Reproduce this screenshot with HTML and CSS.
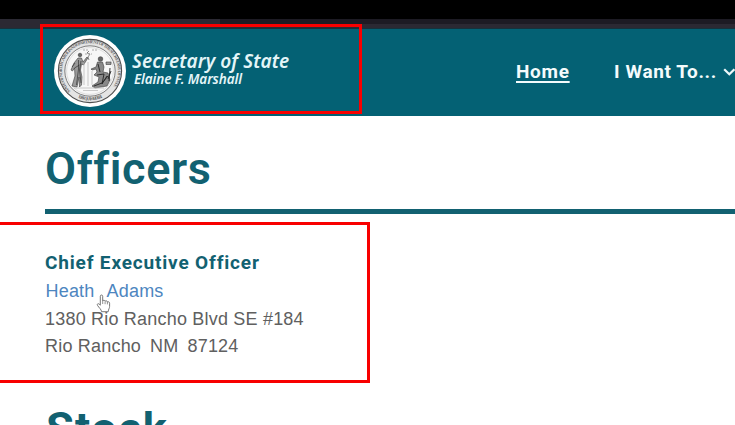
FILE: index.html
```html
<!DOCTYPE html>
<html lang="en">
<head>
<meta charset="utf-8">
<title>Secretary of State</title>
<link rel="stylesheet" href="styles.css">
</head>
<body>
<div class="letterbox"></div>
<div class="tabstrip"><div class="tab"></div></div>
<header class="header">
  <a class="brand">
    <svg class="seal" viewBox="0 0 72 72">
      <defs><path id="ring" d="M16.5 56.2A28 28 0 1 1 55.5 56.2"/><path id="base" d="M18 59.5Q36 71 54 59.5"/></defs>
      <circle cx="36" cy="36" r="36" fill="#fff"/>
      <circle cx="36" cy="36" r="31.6" fill="#e4e4e4" stroke="#4f4f4f" stroke-width="1.1"/>
      <circle cx="36" cy="36" r="25.2" fill="#f7f7f7" stroke="#707070" stroke-width=".9"/>
      <circle cx="36" cy="36" r="23.4" fill="none" stroke="#ccc" stroke-width=".6"/>
      <g class="seal-text">
        <text><textPath href="#ring" textLength="126">STATE OF NORTH CAROLINA DEPARTMENT OF THE SECRETARY OF STATE</textPath></text>
        <text><textPath href="#base" startOffset="7" textLength="25">ESSE QUAM VIDERI</textPath></text>
      </g>
      <g fill="#666" stroke="#3a3a3a" stroke-width=".6" stroke-linejoin="round">
        <circle cx="26" cy="20" r="1.8"/>
        <path d="M24 23l3.5 0 1.5 4 4-5 .8 1-4.3 7-2-1-1 6 1.5 7-.5 8-2 2-.5-10-2 10-5-1 3-10-.5-8-2 3-1.5-1 3-7z" fill="#999"/>
        <path d="M24.5 25l0 9-2 16M27 26l-1.5 9 1.5 13M20.5 33l5-3M21 28l-3 4" fill="none" stroke="#222"/>
        <path d="M33 18l3 1-2 3 1 3M33 18l2-2" fill="none"/>
        <circle cx="46.5" cy="24" r="2.3"/>
        <path d="M43.5 27l5 0 1.5 5-1 5 5 1 2 7-3 6-12 2-3-2 6-4 1-5-5-2 3-3-1-3-4 1-1-1 5-2z" fill="#888"/>
        <path d="M44 29l2 8M43 40l7-1-2 10 5-8M40 51l8-3 6-7M56 33l-1 13M57 36l-3 8" fill="none" stroke="#222" stroke-width=".9"/>
        <path d="M52 27h5v2.5h-5z" fill="#999"/>
      </g>
      <path d="M30 28v22M34 27v24M38 36v14M20 53h30M29 55.5h15" fill="none" stroke="#bbb" stroke-width=".8"/>
      <path d="M31 19h7M29 15h5M38 15h5" fill="none" stroke="#aaa" stroke-width="1" stroke-dasharray="2 1"/>
    </svg>
    <span class="names"><span class="dept">Secretary of State</span><span class="person">Elaine F. Marshall</span></span>
  </a>
  <nav class="nav">
    <a class="home">Home</a>
    <a class="want">I Want To...</a>
    <svg class="chev" viewBox="0 0 12 8"><path d="M1.2 1.2L6.3 6.3 11.4 1.2" fill="none" stroke="#eef8fa" stroke-width="2.2"/></svg>
  </nav>
</header>
<main class="main">
  <h1 class="title">Officers</h1>
  <section class="officer">
    <h2 class="role">Chief Executive Officer</h2>
    <a class="link"><span>Heath</span><span>Adams</span></a>
    <p class="line">1380 Rio Rancho Blvd SE #184</p>
    <p class="line city"><span>Rio Rancho</span><span>NM</span><span>87124</span></p>
  </section>
  <h1 class="stock">Stock</h1>
</main>
<div class="mark mark-brand"></div>
<div class="mark mark-officer"></div>
<svg class="cursor" viewBox="0 0 15 19"><path d="M4.3 11.2V2.2C4.3.6 6.7.6 6.7 2.2V7C7 5.9 9 6 9.1 7.3 9.6 6.4 11.3 6.7 11.4 8 12 7.4 13.6 7.8 13.6 9.2V12.4C13.6 14.3 12.4 15.2 12.2 17.7H5.6C5.3 15.4 3 13.7 1.5 11.4.7 10 2.2 9.2 3.1 10Z" fill="#fff" stroke="#777" stroke-width="1"/><path d="M6.7 7v3M9.1 7.5v2.7M11.4 8v2.4" stroke="#777" stroke-width=".8"/></svg>
</body>
</html>
```

FILE: styles.css
```css
* { box-sizing: border-box; }
body { margin: 0; width: 735px; height: 425px; overflow: hidden; background: #fff; position: relative; font-family: "Liberation Sans", Arial, sans-serif; }
h1, h2, p { margin: 0; white-space: pre; }
.letterbox { height: 19px; background: #000; }
.tabstrip { height: 10px; background: #2b2933; border-bottom: 1px solid #16323c; }
.tab { height: 5px; margin-left: 220px; background: #1d1b24; }
.header { height: 87px; background: #046174; color: #f4fbfc; display: flex; align-items: center; justify-content: space-between; padding-left: 54px; }
.brand { display: flex; align-items: center; gap: 6px; margin-top: -3px; }
.seal { width: 72px; height: 72px; display: block; }
.seal-text { font: 700 4.4px "Liberation Serif", serif; fill: #666; }
.names { display: flex; flex-direction: column; gap: 1px; margin-top: -5px; font-family: "Noto Sans", sans-serif; font-style: italic; white-space: nowrap; color: #e4f5f8; }
.dept { font-size: 19px; line-height: 19px; font-weight: 600; letter-spacing: .1px; }
.person { font-size: 13.5px; line-height: 14px; font-weight: 600; padding-left: 2px; letter-spacing: -.1px; }
.nav { width: 219px; display: flex; align-items: center; flex-shrink: 0; font: 700 19px/22px Roboto, sans-serif; white-space: nowrap; margin-top: -2px; }
.home { width: 99px; letter-spacing: .7px; }
.home { text-decoration: underline; text-decoration-thickness: 1.5px; text-underline-offset: 3px; }
.want { width: 110px; letter-spacing: .6px; }
.chev { width: 12px; height: 8px; flex-shrink: 0; }
.main { padding-left: 45px; font-family: "Liberation Sans", sans-serif; }
.title, .stock, .role { font-family: Roboto, sans-serif; color: #126171; }
.title { height: 98px; padding-top: 25px; border-bottom: 5px solid #126171; font-size: 45px; line-height: 56px; font-weight: 600; letter-spacing: .6px; }
.officer { padding-top: 35px; height: 187px; color: #606060; font-size: 18px; letter-spacing: .2px; }
.role { font-size: 19px; line-height: 28px; font-weight: 700; letter-spacing: .83px; }
.link { display: flex; gap: 12px; padding-left: .5px; line-height: 28px; color: #4d86bf; }
.line { line-height: 28px; }
.city { display: flex; gap: 9px; line-height: 27px; }
.stock { height: 24px; font-size: 45px; line-height: 56px; font-weight: 700; letter-spacing: 1.4px; padding-left: 1px; }
.mark { position: absolute; border: 3px solid #f80000; }
.mark-brand { left: 40px; top: 24px; width: 322px; height: 90px; }
.mark-officer { left: -4px; top: 222px; width: 374px; height: 161px; }
.cursor { position: absolute; left: 96px; top: 294px; width: 15px; height: 19px; }
```
